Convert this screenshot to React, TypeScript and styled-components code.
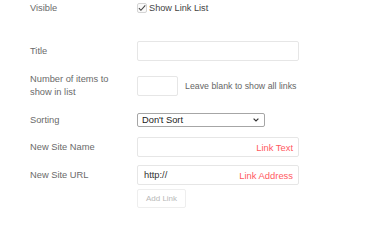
import React, { useState } from 'react';
import styled, { createGlobalStyle } from 'styled-components';

const GlobalStyle = createGlobalStyle`
  body {
    margin: 0;
    background: #fff;
    font-family: "Liberation Sans", Arial, sans-serif;
  }
`;

const Form = styled.div`
  padding: 1px 0 0 30px;
  width: 360px;
`;

const Row = styled.div<{ $top: number }>`
  display: flex;
  align-items: center;
  margin-top: ${({ $top }) => $top}px;
`;

const Label = styled.div`
  width: 107px;
  flex: none;
  padding-right: 14px;
  box-sizing: border-box;
  font-size: 9.3px;
  line-height: 13px;
  color: #6a6a6a;
`;

const CheckLabel = styled.label`
  display: flex;
  align-items: center;
  gap: 2px;
  font-size: 9.2px;
  line-height: 14px;
  color: #444;
`;

const CheckBox = styled.span`
  width: 10px;
  height: 10px;
  box-sizing: border-box;
  border: 1px solid #d4d4d4;
  border-radius: 2px;
  background: #fafafa;
  display: flex;
  align-items: center;
  justify-content: center;
`;

const Field = styled.div<{ $width: number }>`
  position: relative;
  width: ${({ $width }) => $width}px;
  height: 20px;
`;

const TextInput = styled.input`
  display: block;
  width: 100%;
  height: 100%;
  box-sizing: border-box;
  border: 1px solid #e6e6e6;
  border-radius: 2px;
  padding: 0 6px;
  font-family: inherit;
  font-size: 9.3px;
  color: #333;
  outline: none;
  background: #fff;
`;

const Hint = styled.span`
  position: absolute;
  right: 6px;
  top: 50%;
  transform: translateY(-50%);
  font-size: 9.4px;
  color: #ff5a5f;
  pointer-events: none;
`;

const Note = styled.span`
  margin-left: 7px;
  font-size: 8.8px;
  color: #666;
`;

const SelectWrap = styled.div`
  position: relative;
  width: 128px;
  height: 14px;
`;

const Select = styled.select`
  display: block;
  appearance: none;
  width: 100%;
  height: 100%;
  box-sizing: border-box;
  border: 1px solid #a6a6a6;
  border-radius: 2px;
  background: #fff;
  padding: 0 0 0 4px;
  font-family: inherit;
  font-size: 9.3px;
  color: #222;
  outline: none;
`;

const Chevron = styled.svg`
  position: absolute;
  right: 6px;
  top: 5px;
  pointer-events: none;
`;

const Button = styled.button`
  display: block;
  width: 49px;
  height: 19px;
  border: 1px solid #eeeeee;
  border-radius: 2px;
  background: #fff;
  font-family: inherit;
  font-size: 8px;
  color: #b8b8b8;
  padding: 0;
`;

const Spacer = styled.div`
  width: 107px;
  flex: none;
`;

export default function App() {
  const [sort, setSort] = useState('none');

  return (
    <>
      <GlobalStyle />
      <Form>
        <Row $top={0}>
          <Label>Visible</Label>
          <CheckLabel>
            <CheckBox>
              <svg width="9" height="8" viewBox="0 0 9 8">
                <path d="M1 4.2 L3.3 6.6 L8.2 1" fill="none" stroke="#444" strokeWidth="1.2" />
              </svg>
            </CheckBox>
            Show Link List
          </CheckLabel>
        </Row>

        <Row $top={26}>
          <Label>Title</Label>
          <Field $width={162}>
            <TextInput />
          </Field>
        </Row>

        <Row $top={12}>
          <Label>Number of items to show in list</Label>
          <Field $width={41}>
            <TextInput />
          </Field>
          <Note>Leave blank to show all links</Note>
        </Row>

        <Row $top={14}>
          <Label>Sorting</Label>
          <SelectWrap>
            <Select value={sort} onChange={(e) => setSort(e.target.value)}>
              <option value="none">Don't Sort</option>
              <option value="asc">Sort A-Z</option>
              <option value="desc">Sort Z-A</option>
            </Select>
            <Chevron width="6" height="4" viewBox="0 0 6 4">
              <path d="M0.6 0.6 L3 3 L5.4 0.6" fill="none" stroke="#333" strokeWidth="1.2" />
            </Chevron>
          </SelectWrap>
        </Row>

        <Row $top={10}>
          <Label>New Site Name</Label>
          <Field $width={162}>
            <TextInput />
            <Hint>Link Text</Hint>
          </Field>
        </Row>

        <Row $top={8}>
          <Label>New Site URL</Label>
          <Field $width={162}>
            <TextInput defaultValue="http://" />
            <Hint>Link Address</Hint>
          </Field>
        </Row>

        <Row $top={4}>
          <Spacer />
          <Button>Add Link</Button>
        </Row>
      </Form>
    </>
  );
}
